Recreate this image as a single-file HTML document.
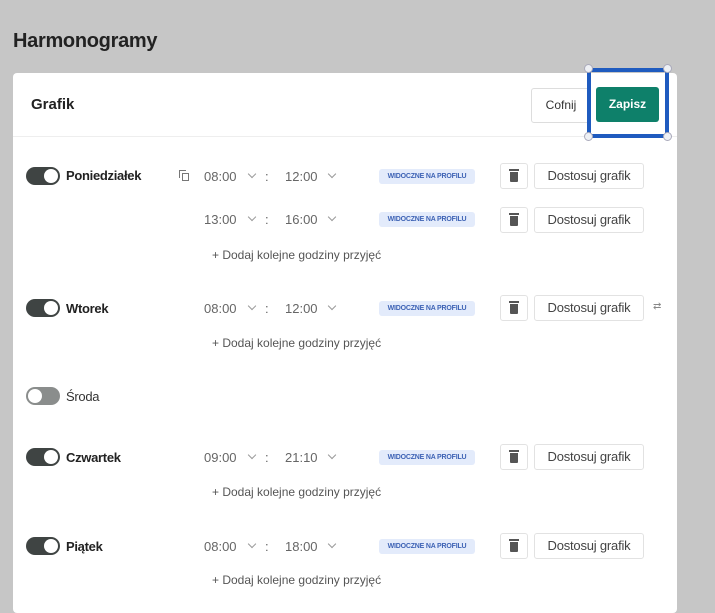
<!DOCTYPE html>
<html><head><meta charset="utf-8"><style>
*{box-sizing:border-box;margin:0;padding:0}
body{width:715px;height:592px;background:#c6c6c6;font-family:"Liberation Sans",Arial,sans-serif;position:relative;overflow:hidden;color:#333}
.a{position:absolute}
h1{position:absolute;left:13px;top:30px;font-size:20px;font-weight:bold;color:#222;letter-spacing:-0.3px}
.card{position:absolute;left:13px;top:73px;width:664px;height:540px;background:#fff;border-radius:4px}
.hline{position:absolute;left:13px;top:136px;width:664px;height:1px;background:#eee}
.tg{position:absolute;left:26px;width:34px;height:18px;border-radius:9px;background:#3f4443}
.tg::after{content:"";position:absolute;right:2px;top:2px;width:14px;height:14px;border-radius:50%;background:#fff}
.tg.off{background:#8a8d8c}.tg.off::after{right:auto;left:2px}
.day{position:absolute;left:66px;font-size:13px;font-weight:bold;color:#222;letter-spacing:-0.3px}
.t{position:absolute;font-size:13px;color:#666}
.ch{position:absolute;width:6px;height:6px;border-right:1px solid #999;border-bottom:1px solid #999;transform:rotate(45deg)}
.bd{position:absolute;left:379px;width:96px;height:15px;background:#e3ebfb;border-radius:3px;color:#3e63b5;font-size:7px;font-weight:bold;text-align:center;line-height:15px;letter-spacing:-0.2px}
.tr{position:absolute;left:500px;width:28px;height:26px;border:1px solid #e2e2e2;border-radius:3px}
.tr i{position:absolute;left:9px;top:8px;width:8px;height:10px;background:#555;border-radius:0 0 1px 1px}
.tr b{position:absolute;left:8px;top:5px;width:10px;height:2px;background:#555}
.ds{position:absolute;left:534px;width:110px;height:26px;border:1px solid #e2e2e2;border-radius:3px;font-size:13px;color:#444;text-align:center;line-height:24px;letter-spacing:-0.2px}
.add{position:absolute;left:212px;font-size:12px;color:#555}
</style></head><body>
<h1>Harmonogramy</h1>
<div class="card"></div>
<div class="hline"></div>
<div class="a" style="left:31px;top:96px;font-size:15px;font-weight:bold;color:#222">Grafik</div>
<div class="a" style="left:531px;top:88px;width:60px;height:35px;border:1px solid #ddd;border-radius:3px;font-size:12px;text-align:center;line-height:33px">Cofnij</div>
<div class="a" style="left:596px;top:87px;width:63px;height:35px;background:#0e806a;border-radius:3px;color:#fff;font-size:12px;font-weight:bold;text-align:center;line-height:35px">Zapisz</div>
<div class="a" style="left:587px;top:68px;width:82px;height:70px;border:4px solid #1f5bbf"></div>
<div class="a" style="left:584px;top:64px;width:9px;height:9px;border-radius:50%;background:#eef0f4;border:1px solid #aab"></div>
<div class="a" style="left:663px;top:64px;width:9px;height:9px;border-radius:50%;background:#eef0f4;border:1px solid #aab"></div>
<div class="a" style="left:584px;top:132px;width:9px;height:9px;border-radius:50%;background:#eef0f4;border:1px solid #aab"></div>
<div class="a" style="left:663px;top:132px;width:9px;height:9px;border-radius:50%;background:#eef0f4;border:1px solid #aab"></div>

<div class="tg" style="top:167px"></div><div class="day" style="top:168px">Poniedziałek</div>
<div class="a" style="left:182px;top:173px;width:7px;height:8px;border:1px solid #777"></div>
<div class="a" style="left:179px;top:170px;width:7px;height:8px;border-left:1px solid #777;border-top:1px solid #777"></div>

<div class="t" style="left:204px;top:169px">08:00</div><div class="ch" style="left:249px;top:171px"></div><div class="t" style="left:265px;top:169px">:</div><div class="t" style="left:285px;top:169px">12:00</div><div class="ch" style="left:329px;top:171px"></div>
<div class="bd" style="top:169px">WIDOCZNE NA PROFILU</div>
<div class="tr" style="top:163px"><b></b><i></i></div><div class="ds" style="top:163px">Dostosuj grafik</div>

<div class="t" style="left:204px;top:212px">13:00</div><div class="ch" style="left:249px;top:214px"></div><div class="t" style="left:265px;top:212px">:</div><div class="t" style="left:285px;top:212px">16:00</div><div class="ch" style="left:329px;top:214px"></div>
<div class="bd" style="top:212px">WIDOCZNE NA PROFILU</div>
<div class="tr" style="top:207px"><b></b><i></i></div><div class="ds" style="top:207px">Dostosuj grafik</div>
<div class="add" style="top:248px">+ Dodaj kolejne godziny przyjęć</div>

<div class="tg" style="top:299px"></div><div class="day" style="top:301px">Wtorek</div>
<div class="t" style="left:204px;top:301px">08:00</div><div class="ch" style="left:249px;top:303px"></div><div class="t" style="left:265px;top:301px">:</div><div class="t" style="left:285px;top:301px">12:00</div><div class="ch" style="left:329px;top:303px"></div>
<div class="bd" style="top:301px">WIDOCZNE NA PROFILU</div>
<div class="tr" style="top:295px"><b></b><i></i></div><div class="ds" style="top:295px">Dostosuj grafik</div>
<div class="a" style="left:653px;top:301px;font-size:10px;color:#888">⇄</div>
<div class="add" style="top:336px">+ Dodaj kolejne godziny przyjęć</div>

<div class="tg off" style="top:387px"></div><div class="day" style="top:389px;font-weight:normal;color:#333">Środa</div>

<div class="tg" style="top:448px"></div><div class="day" style="top:450px">Czwartek</div>
<div class="t" style="left:204px;top:450px">09:00</div><div class="ch" style="left:249px;top:452px"></div><div class="t" style="left:265px;top:450px">:</div><div class="t" style="left:285px;top:450px">21:10</div><div class="ch" style="left:329px;top:452px"></div>
<div class="bd" style="top:450px">WIDOCZNE NA PROFILU</div>
<div class="tr" style="top:444px"><b></b><i></i></div><div class="ds" style="top:444px">Dostosuj grafik</div>
<div class="add" style="top:485px">+ Dodaj kolejne godziny przyjęć</div>

<div class="tg" style="top:537px"></div><div class="day" style="top:539px">Piątek</div>
<div class="t" style="left:204px;top:539px">08:00</div><div class="ch" style="left:249px;top:541px"></div><div class="t" style="left:265px;top:539px">:</div><div class="t" style="left:285px;top:539px">18:00</div><div class="ch" style="left:329px;top:541px"></div>
<div class="bd" style="top:539px">WIDOCZNE NA PROFILU</div>
<div class="tr" style="top:533px"><b></b><i></i></div><div class="ds" style="top:533px">Dostosuj grafik</div>
<div class="add" style="top:573px">+ Dodaj kolejne godziny przyjęć</div>
</body></html>
